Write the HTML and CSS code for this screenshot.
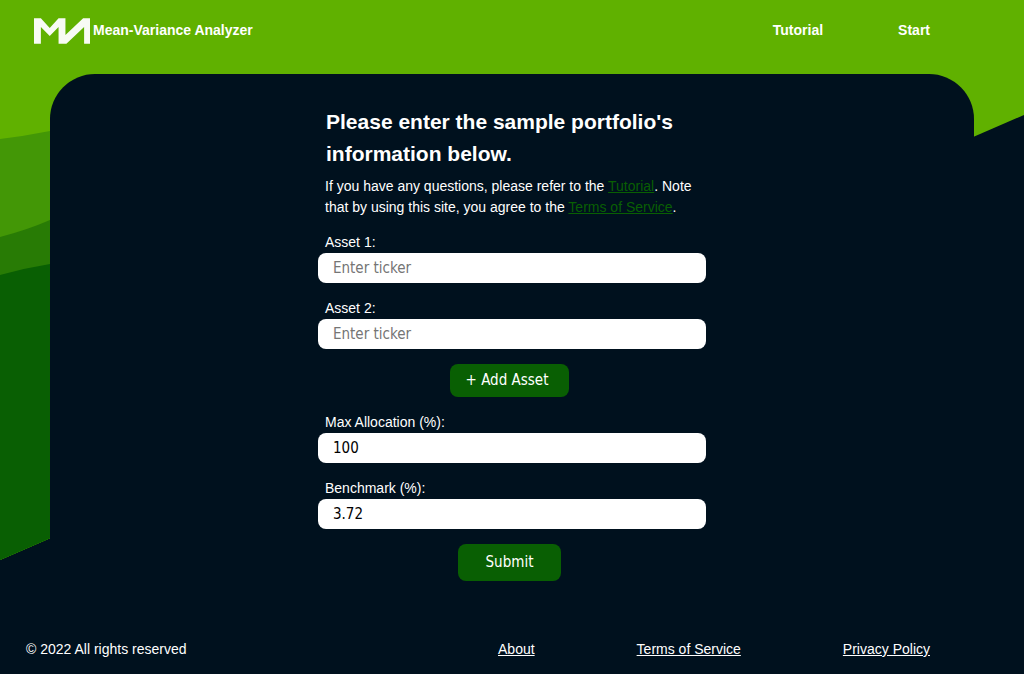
FILE: index.html
```html
<!DOCTYPE html>
<html lang="en">
<head>
<meta charset="utf-8">
<title>Mean-Variance Analyzer</title>
<link rel="stylesheet" href="styles.css">
</head>
<body>
<svg class="backdrop" viewBox="0 0 1024 674" preserveAspectRatio="none" aria-hidden="true">
  <path fill="#60b100" d="M0 0H1024V115L0 560Z"/>
  <path fill="#439706" d="M0 139Q25 136 50 131L200 100V473L0 560Z"/>
  <path fill="#287b05" d="M0 237Q27 230 50 220L200 150V473L0 560Z"/>
  <path fill="#095f03" d="M0 275Q25 268 50 264L200 240V473L0 560Z"/>
</svg>
<header class="header">
  <a class="brand" href="#">
    <svg class="logo" viewBox="0 0 57 26" aria-hidden="true"><path fill="#f8fbf4" d="M0 0H7L16 10L25 0H32V17L50 0H57V26H51V9L33 26H25V9L16 18L7 9V26H0Z"/></svg>
    <span>Mean-Variance Analyzer</span>
  </a>
  <nav class="nav"><a href="#tutorial">Tutorial</a><a href="#start">Start</a></nav>
</header>
<main class="panel">
  <form class="form">
    <h1 class="title">Please enter the sample portfolio's information below.</h1>
    <p class="intro">If you have any questions, please refer to the <a href="#tutorial">Tutorial</a>. Note that by using this site, you agree to the <a href="#terms">Terms of Service</a>.</p>
    <div class="field"><label for="asset1">Asset 1:</label><input id="asset1" type="text" placeholder="Enter ticker"></div>
    <div class="field"><label for="asset2">Asset 2:</label><input id="asset2" type="text" placeholder="Enter ticker"></div>
    <button class="button add" type="button">+ Add Asset</button>
    <div class="field"><label for="max">Max Allocation (%):</label><input id="max" type="text" value="100"></div>
    <div class="field"><label for="benchmark">Benchmark (%):</label><input id="benchmark" type="text" value="3.72"></div>
    <button class="button submit" type="submit">Submit</button>
  </form>
</main>
<footer class="footer">
  <span>© 2022 All rights reserved</span>
  <nav class="links"><a href="#about">About</a><a href="#terms">Terms of Service</a><a href="#privacy">Privacy Policy</a></nav>
</footer>
</body>
</html>
```
FILE: styles.css
```css
* { box-sizing: border-box; }
body {
  margin: 0;
  min-height: 100vh;
  display: flex;
  flex-direction: column;
  background: #00111e;
  color: #fff;
  font: 14px/21px "Liberation Sans", Arial, sans-serif;
}
.backdrop {
  position: absolute;
  inset: 0;
  z-index: -1;
  width: 100%;
  height: 100%;
}
.header {
  display: flex;
  justify-content: space-between;
  align-items: flex-start;
  padding: 18px 94px 30px 34px;
  font-weight: bold;
  line-height: 24px;
}
.header a { color: #fff; text-decoration: none; }
.brand { display: flex; align-items: flex-start; gap: 3px; }
.logo { width: 56px; height: 26px; }
.nav { display: flex; gap: 75px; }
.panel {
  margin: 0 50px;
  padding: 32px 16px;
  border-radius: 45px 45px 0 0;
  background: #00111e;
}
.form {
  display: flex;
  flex-direction: column;
  gap: 15px;
  width: 100%;
  max-width: 388px;
  margin: 0 auto;
}
.title {
  margin: 0 8px;
  font-size: 21px;
  line-height: 32px;
}
.intro { margin: -9px 8px -1px 7px; }
.intro a { color: #095f03; }
.field { display: flex; flex-direction: column; }
.field label { padding-left: 7px; }
.field input {
  width: 100%;
  height: 30px;
  padding: 0 15px;
  border: 0;
  border-radius: 8px;
  background: #fff;
  color: #000;
  font: 15px "DejaVu Sans Condensed", Tahoma, sans-serif;
}
.field input::placeholder { color: #757575; }
.button {
  align-self: center;
  margin-right: 5px;
  border: 0;
  border-radius: 8px;
  background: #095f03;
  color: #fff;
  font: 15px/21px "DejaVu Sans Condensed", Tahoma, sans-serif;
}
.add { padding: 6px 21px 6px 16px; }
.submit { padding: 8px 28px; }
.footer {
  display: flex;
  justify-content: space-between;
  margin-top: auto;
  padding: 14px 94px 14px 26px;
}
.links { display: flex; gap: 102px; }
.links a { color: #fff; }
```
